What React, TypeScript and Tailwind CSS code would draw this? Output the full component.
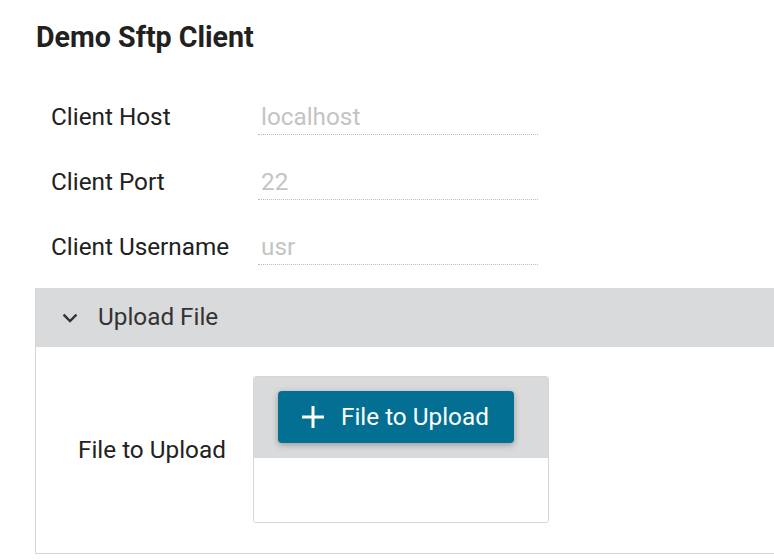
import React from 'react';

const FIELDS = [
  { label: 'Client Host',     placeholder: 'localhost' },
  { label: 'Client Port',     placeholder: '22'        },
  { label: 'Client Username', placeholder: 'usr'       },
];

export default function App() {
  return (
    <div className="w-[774px] h-[560px] overflow-hidden bg-white text-[#212121]" style={{ fontFamily: 'Roboto, "Noto Sans", sans-serif' }}>
      <div className="pl-[35px] pt-[19px]">
        <h1 className="ml-px text-[28.6px] leading-[36px] font-bold">Demo Sftp Client</h1>

        {/* Connection fields */}
        <div className="mt-[29px] pl-[16px]">
          {FIELDS.map(f => (
            <div key={f.label} className="flex items-center h-[65px]">
              <label className="w-[207px] text-[24.3px] leading-[30px]">{f.label}</label>
              <input
                placeholder={f.placeholder}
                className="w-[280px] h-[37px] px-[3px] text-[24.3px] bg-transparent outline-none border-b border-dotted border-[#bdbdbd] placeholder:text-[#c4c4c4]"
              />
            </div>
          ))}
        </div>

        {/* Upload panel */}
        <div className="mt-[9px] w-[800px] border-l border-b border-[#d6d6d6]">
          <div className="flex items-center h-[59px] bg-[#d9dadb] pl-[25px]">
            <svg width="18" height="18" viewBox="0 0 24 24" fill="none" stroke="#333" strokeWidth="3.2" strokeLinecap="square">
              <path d="M4.5 8.5l7.5 7.5 7.5-7.5" />
            </svg>
            <span className="ml-[19px] text-[24.3px] text-[#333]">Upload File</span>
          </div>

          <div className="flex items-center pt-[29px] pb-[30px] pl-[42px]">
            <label className="w-[175px] text-[24.3px] leading-[30px] text-[#222]">File to Upload</label>
            <div className="w-[296px] h-[147px] border border-[#d6d6d6] rounded-[3px] overflow-hidden flex flex-col">
              <div className="bg-[#d9dadb] pt-[14px] pb-[15px] pl-[24px]">
                <button className="flex items-center w-[236px] h-[52px] rounded-[4px] bg-[#036f93] text-white shadow-[0_2px_6px_rgba(0,0,0,0.3)] pl-[24px]">
                  <svg width="22" height="22" viewBox="0 0 22 22" stroke="white" strokeWidth="3">
                    <path d="M11 0v22M0 11h22" />
                  </svg>
                  <span className="ml-[17px] text-[24.3px] leading-[30px]">File to Upload</span>
                </button>
              </div>
              <div className="flex-1 bg-white" />
            </div>
          </div>
        </div>
      </div>
    </div>
  );
}
